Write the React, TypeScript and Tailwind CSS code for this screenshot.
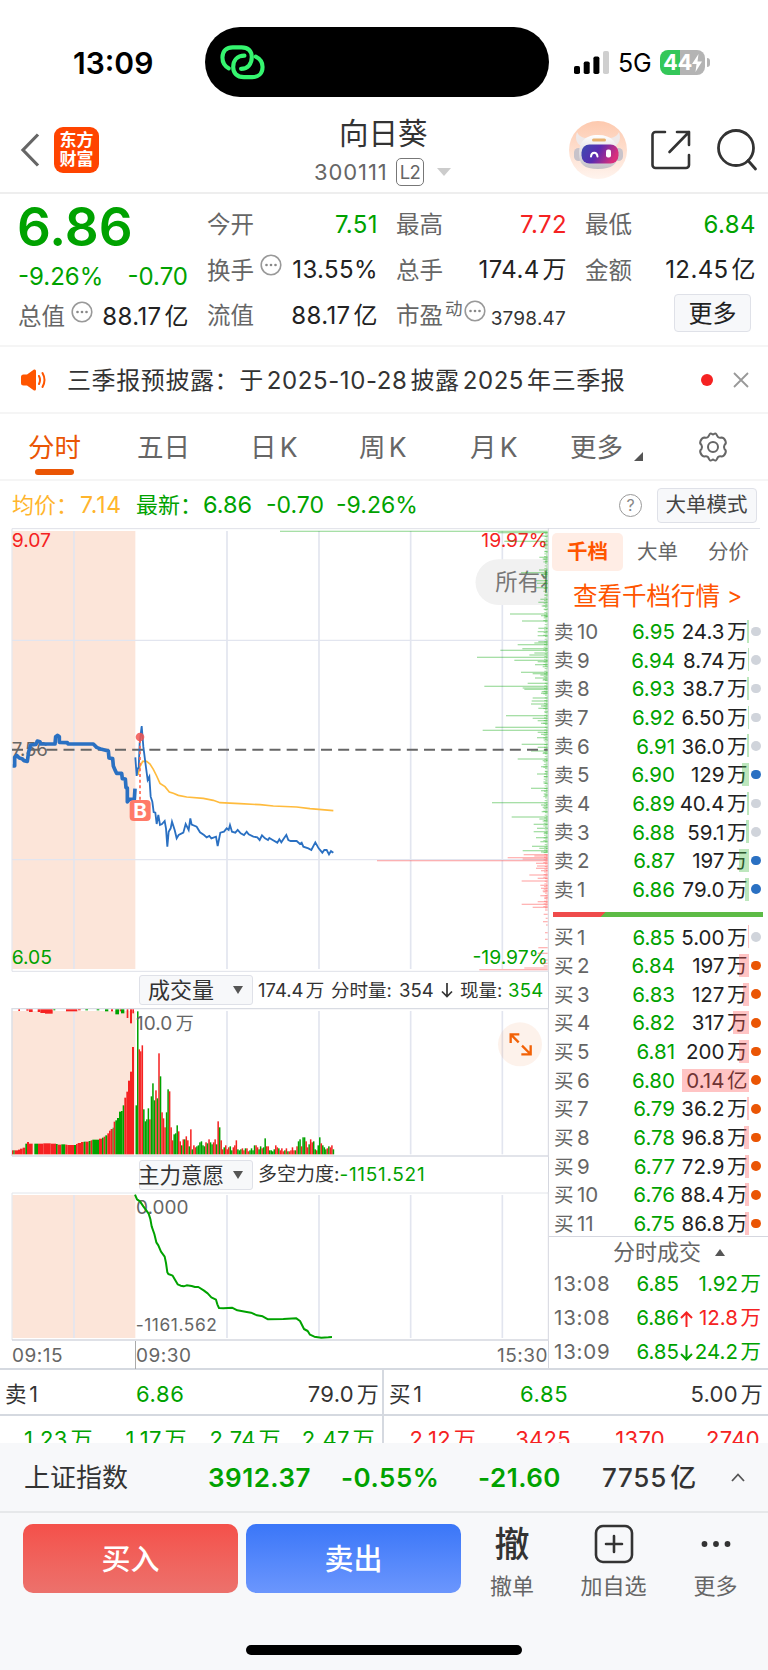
import React from "react";
import clsx from "clsx";

interface DepthRow {
  label: string;
  level: number;
  price: string;
  qty: string;
  bar: number;
  dot: "gray" | "blue" | "orange";
}

const sells: DepthRow[] = [
  { label: "卖", level: 10, price: "6.95", qty: "24.3万", bar: 2, dot: "gray" },
  { label: "卖", level: 9, price: "6.94", qty: "8.74万", bar: 1, dot: "gray" },
  { label: "卖", level: 8, price: "6.93", qty: "38.7万", bar: 2, dot: "gray" },
  { label: "卖", level: 7, price: "6.92", qty: "6.50万", bar: 1, dot: "gray" },
  { label: "卖", level: 6, price: "6.91", qty: "36.0万", bar: 2, dot: "gray" },
  { label: "卖", level: 5, price: "6.90", qty: "129万", bar: 7, dot: "blue" },
  { label: "卖", level: 4, price: "6.89", qty: "40.4万", bar: 2, dot: "gray" },
  { label: "卖", level: 3, price: "6.88", qty: "59.1万", bar: 3, dot: "gray" },
  { label: "卖", level: 2, price: "6.87", qty: "197万", bar: 10, dot: "blue" },
  { label: "卖", level: 1, price: "6.86", qty: "79.0万", bar: 4, dot: "blue" },
];

const buys: DepthRow[] = [
  { label: "买", level: 1, price: "6.85", qty: "5.00万", bar: 1, dot: "gray" },
  { label: "买", level: 2, price: "6.84", qty: "197万", bar: 10, dot: "orange" },
  { label: "买", level: 3, price: "6.83", qty: "127万", bar: 6, dot: "orange" },
  { label: "买", level: 4, price: "6.82", qty: "317万", bar: 16, dot: "orange" },
  { label: "买", level: 5, price: "6.81", qty: "200万", bar: 10, dot: "orange" },
  { label: "买", level: 6, price: "6.80", qty: "0.14亿", bar: 67, dot: "orange" },
  { label: "买", level: 7, price: "6.79", qty: "36.2万", bar: 2, dot: "orange" },
  { label: "买", level: 8, price: "6.78", qty: "96.8万", bar: 5, dot: "orange" },
  { label: "买", level: 9, price: "6.77", qty: "72.9万", bar: 4, dot: "orange" },
  { label: "买", level: 10, price: "6.76", qty: "88.4万", bar: 4, dot: "orange" },
  { label: "买", level: 11, price: "6.75", qty: "86.8万", bar: 4, dot: "orange" },
];

const trades = [
  { time: "13:08", price: "6.85", arrow: "", qty: "1.92万" },
  { time: "13:08", price: "6.86", arrow: "up", qty: "12.8万" },
  { time: "13:09", price: "6.85", arrow: "down", qty: "24.2万" },
];

// chart units are thirds of a pixel
const preOpenLine =
  "38,738 44,738 44,712 50,706 58,714 66,716 72,722 82,724 86,695 92,675 108,673 112,663 120,665 122,672 165,672 167,650 173,646 178,650 178,667 202,668 204,672 280,672 290,682 305,688 325,693 327,714 338,716 340,738 346,752 350,760 365,760 367,776 376,777 378,803 382,804 382,846 388,838 403,838 405,806";

const priceLine =
  "406,712 410,768 413,745 416,745 419,670 425,618 430,680 437,735 443,780 448,770 452,830 457,845 461,876 466,878 470,912 475,885 480,915 486,912 494,903 498,925 502,980 506,935 512,925 516,905 524,930 530,955 536,945 550,938 557,912 566,930 571,895 575,914 590,920 600,937 612,945 620,952 628,948 634,955 648,950 653,978 661,938 672,935 680,925 686,930 690,915 696,935 706,938 713,930 722,940 732,945 740,935 746,943 760,950 772,952 779,960 786,946 795,955 804,960 808,954 818,960 832,968 838,958 844,967 852,955 859,945 865,960 872,963 890,963 900,972 905,968 910,980 925,985 934,990 946,967 956,985 967,998 973,990 980,990 987,1003 993,993 1000,998";

const averageLine =
  "414,765 420,740 428,724 440,724 450,732 460,748 470,768 480,790 495,800 508,816 520,820 535,826 560,831 610,835 640,841 660,848 720,851 780,854 820,858 890,861 930,866 1000,872";

const forceLine =
  "405,135 411,149 420,155 430,170 446,192 451,208 455,230 463,253 469,278 475,287 483,306 494,321 498,340 502,368 505,373 518,378 525,390 533,404 542,408 551,410 560,407 575,409 585,412 595,412 611,422 623,431 634,443 648,450 652,464 657,475 670,476 696,474 712,482 736,486 753,489 771,497 788,500 804,509 850,508 889,506 900,514 912,538 923,544 930,555 943,561 964,564 985,563 996,562";

const askBars: [number, number][] = [
  [34, 803], [38, 150], [48, 20], [64, 130], [75, 12], [95, 10], [112, 25], [117, 15], [125, 8], [150, 26], [158, 80], [163, 20], [182, 35], [190, 32],
  [203, 35], [225, 10], [238, 22], [247, 28], [258, 18], [268, 12], [282, 113], [287, 20], [290, 10], [303, 77], [325, 28], [335, 30], [347, 30],
  [365, 28], [369, 40], [374, 90], [386, 76], [391, 142], [399, 40], [405, 55], [412, 212], [421, 100], [425, 30], [434, 38], [440, 15], [457, 80],
  [461, 45], [465, 22], [474, 38], [480, 15], [490, 60], [499, 190], [504, 75], [508, 70], [515, 18], [520, 20], [534, 45], [543, 48], [552, 50],
  [558, 20], [565, 28], [575, 10], [587, 125], [595, 45], [602, 30], [610, 20], [622, 157], [631, 195], [637, 30], [643, 20], [653, 32], [660, 12],
  [673, 78], [682, 30], [693, 50], [700, 15], [717, 90], [722, 15], [740, 20], [755, 8], [762, 32], [770, 12], [790, 12], [805, 50], [812, 20],
  [825, 10], [848, 167], [855, 20], [862, 15], [875, 18], [891, 108], [897, 25], [903, 15], [913, 42], [925, 32], [935, 42], [940, 12], [953, 35],
  [965, 22], [979, 47], [985, 25], [992, 75], [996, 20],
];

const bidBars: [number, number][] = [
  [1004, 72], [1008, 40], [1013, 120], [1017, 75], [1022, 512], [1030, 35], [1038, 32], [1045, 35], [1052, 20], [1065, 55], [1075, 30], [1083, 78],
  [1096, 22], [1105, 20], [1113, 15], [1127, 22], [1133, 10], [1145, 30], [1153, 78], [1162, 45], [1170, 8], [1183, 12], [1195, 6], [1205, 14],
  [1215, 5], [1238, 8], [1258, 8], [1283, 28], [1300, 30], [1320, 12], [1330, 18], [1338, 12], [1344, 70], [1349, 205],
];

const volumes = [
  49, 143, 105, 103, 109, 45, 33, 35, 46, 35, 58, 71, 54, 64, 56, 101, 78, 42, 36, 27, 42, 65, 63, 27, 14, 20, 21, 29, 23, 13, 9, 15, 15, 18, 14, 8,
  25, 5, 9, 7, 8, 9, 12, 13, 9, 8, 12, 11, 15, 12, 10, 12, 15, 10, 33, 27, 14, 5, 7, 9, 5, 7, 8, 4, 7, 9, 14, 5, 4, 5, 6, 4, 6, 6, 3, 4, 6, 4, 9, 9, 7,
  5, 8, 6, 7, 16, 8, 8, 4, 4, 3, 5, 9, 7, 6, 4, 6, 3, 4, 6, 3, 3, 4, 7, 4, 4, 8, 13, 15, 8, 17, 17, 13, 7, 10, 15, 12, 13, 5, 4, 9, 17, 11, 9, 7, 5, 6,
  8, 7, 9, 5,
];
const volumeColors =
  "ggrrrggggrgggrgrgrrrggrrrgggrrgrgrrgrgrrggggggrgrggrrgrgrrgrrrggrrrgggrrgrrggggrrggrggrrggggrrgrrrgrgrrrrgrggrggrrgrrggrggrgggrgrrg";

// x, width, height, colour
const preVolumes: [number, number, number, string][] = [
  [36, 4, 12, "r"], [40, 4, 12, "g"], [44, 10, 12, "r"], [54, 6, 14, "r"], [60, 8, 17, "r"], [68, 8, 20, "r"], [76, 5, 32, "g"], [81, 6, 37, "r"],
  [87, 11, 32, "r"], [103, 11, 32, "g"], [114, 16, 32, "r"], [130, 22, 33, "r"], [152, 16, 32, "r"], [168, 5, 31, "g"], [173, 11, 29, "r"],
  [184, 12, 30, "g"], [196, 6, 29, "r"], [202, 20, 28, "r"], [222, 6, 28, "g"], [228, 5, 31, "r"], [233, 10, 34, "r"], [243, 8, 37, "r"],
  [251, 6, 38, "g"], [257, 9, 38, "r"], [266, 6, 40, "g"], [272, 5, 42, "r"], [277, 20, 44, "g"], [297, 9, 47, "r"], [306, 5, 50, "g"],
  [311, 5, 53, "r"], [316, 6, 57, "g"], [322, 5, 63, "r"], [327, 5, 71, "r"], [332, 6, 76, "r"], [338, 3, 80, "g"], [341, 5, 98, "r"],
  [346, 5, 102, "g"], [351, 6, 109, "g"], [357, 6, 128, "g"], [363, 5, 130, "g"], [368, 5, 147, "g"], [373, 6, 170, "r"], [379, 5, 188, "r"],
  [384, 6, 221, "r"], [390, 6, 248, "r"], [396, 6, 322, "r"],
];

const hangingVolumes: [number, number, number, string][] = [
  [55, 5, 5, "r"], [79, 7, 4, "r"], [87, 11, 8, "r"], [113, 8, 8, "r"], [121, 14, 11, "r"], [135, 23, 13, "r"], [160, 6, 3, "g"], [198, 34, 6, "r"],
  [234, 8, 3, "r"], [256, 8, 3, "g"], [290, 8, 3, "g"], [315, 10, 6, "g"], [333, 6, 6, "r"], [346, 11, 15, "g"], [359, 4, 6, "r"], [363, 10, 12, "g"],
  [380, 5, 26, "r"], [390, 6, 42, "r"], [397, 5, 12, "r"],
];

const gridX = [222, 681, 957, 1232, 1507];

function GridLines({ top, bottom }: { top: number; bottom: number }) {
  return (
    <g stroke="#e2e5ef" strokeWidth={5}>
      {gridX.map((x) => (
        <line key={x} x1={x} x2={x} y1={top} y2={bottom} />
      ))}
    </g>
  );
}

function DepthBars({ bars, from, to, fill }: { bars: [number, number][]; from: number; to: number; fill: string }) {
  const base: number[] = [];
  for (let y = from; y < to; y += 4) base.push(y);
  return (
    <g fill={fill}>
      {base.map((y) => (
        <rect key={y} x={1643 - 3 - ((y * 7) % 11)} y={y} width={3 + ((y * 7) % 11)} height={3.4} />
      ))}
      {bars.map(([y, len]) => (
        <rect key={y} x={1643 - len} y={y - 2} width={len} height={4} />
      ))}
    </g>
  );
}

function StatusBar() {
  return (
    <div className="flex h-[102px] items-end pb-[5px]">
      <div className="flex h-[70px] w-[205px] items-center pt-[2px] pl-[73px] text-[30px] font-semibold text-black">13:09</div>
      <div className="flex h-[70px] w-[344px] items-center rounded-full bg-black pl-[15px]">
        <svg className="h-[36px] w-[45px]" viewBox="0 0 46 36" fill="none" stroke="#35f56f" strokeWidth="4.2" strokeLinecap="round">
          <path d="M9 24.5C4 22 2.500 18 2.500 13.500C2.500 6 7 3 13 3H22C29 3 32.500 7 32.500 13C32.500 20 28.500 25 21.500 25" />
          <path d="M36.500 12.500C41.500 15 43.500 18.500 43.500 23C43.500 30 39 33.500 33 33.500H24.500C17 33.500 13.500 29 13.500 23C13.500 16.500 17.500 11.500 25 11.500" />
        </svg>
      </div>
      <div className="flex h-[70px] items-center pt-[1px] pl-[25px]">
        <svg className="h-[23px] w-[36px]" viewBox="0 0 36 23">
          <rect x="0" y="15" width="6" height="8" rx="1.800" />
          <rect x="9.700" y="10.500" width="6" height="12.500" rx="1.800" />
          <rect x="19.400" y="5.500" width="6" height="17.500" rx="1.800" />
          <rect x="29" y="0" width="6" height="23" rx="1.800" fill="#cfcfcf" />
        </svg>
        <span className="ml-[8px] w-[42px] pt-[3px] text-[25px] tracking-[-0.3px] text-black">5G</span>
        <div className="flex h-[25px] w-[45px] items-center justify-center rounded-[8px] bg-[linear-gradient(90deg,#34c759_44%,#b4b4b4_44%)] text-[22px] font-bold tracking-[-0.5px] text-white">
          44
          <svg className="h-[18px] w-[10px]" viewBox="0 0 10 18" fill="white">
            <path d="M6.500 0L0 10H4.500L3.500 18L10 7.500H5.500Z" />
          </svg>
        </div>
        <div className="ml-[2px] h-[9px] w-[3px] rounded-r-full bg-[#b4b4b4]" />
      </div>
    </div>
  );
}

function Avatar() {
  return (
    <svg className="h-[58px] w-[58px]" viewBox="0 0 58 58">
      <defs>
        <linearGradient id="avatarBg" x1="0" y1="0" x2="0" y2="1">
          <stop offset="0" stopColor="#fdc9ae" />
          <stop offset="1" stopColor="#fff4ee" />
        </linearGradient>
        <linearGradient id="visor" x1="0" y1="0" x2="1" y2="0.300">
          <stop offset="0" stopColor="#3b4cb0" />
          <stop offset="0.500" stopColor="#5a2bb0" />
          <stop offset="1" stopColor="#d82f7c" />
        </linearGradient>
        <linearGradient id="shell" x1="0" y1="0" x2="0" y2="1">
          <stop offset="0" stopColor="#ffffff" />
          <stop offset="1" stopColor="#c4c0c6" />
        </linearGradient>
      </defs>
      <circle cx="29" cy="29" r="29" fill="url(#avatarBg)" />
      <path d="M8 11C6 17 7 22 12 25L19 17C13 17 10 15 8 11Z" fill="#efe9e9" />
      <path d="M50 11C52 17 51 22 46 25L39 17C45 17 48 15 50 11Z" fill="#efe9e9" />
      <rect x="5" y="27" width="9" height="13" rx="4.500" fill="#c8c3ca" />
      <rect x="45" y="27" width="9" height="13" rx="4.500" fill="#c8c3ca" />
      <path d="M29 14C43 14 49 22 49 33C49 43 43 48 29 48C15 48 10 43 10 33C10 22 15 14 29 14Z" fill="url(#shell)" />
      <rect x="23" y="17.500" width="14" height="3" rx="1.500" fill="#e8b06c" />
      <rect x="12.500" y="23.500" width="37" height="19" rx="8" fill="url(#visor)" />
      <path d="M22 35.500C22.500 30.500 28 30.500 28.500 35.500" fill="none" stroke="white" strokeWidth="2" strokeLinecap="round" />
      <rect x="37" y="28.500" width="5" height="8" rx="2" fill="white" />
    </svg>
  );
}

function Header() {
  return (
    <div className="flex h-[92px] items-center border-b-2 border-[#eeeeee] pt-[5px]">
      <svg className="ml-[20px] h-[34px] w-[20px]" viewBox="0 0 20 34" fill="none" stroke="#666" strokeWidth="3.200">
        <path d="M18 1.500L3 17L18 32.500" />
      </svg>
      <div className="ml-[14px] flex h-[46px] w-[45px] flex-col items-center justify-center rounded-[9px] bg-[#ff4400] text-[17px] leading-[19px] font-bold text-white">
        <span>东方</span>
        <span>财富</span>
      </div>
      <div className="w-[470px] whitespace-nowrap">
        <div className="ml-[240px] text-[29.500px] leading-[38px] text-[#333]">向日葵</div>
        <div className="mt-[6px] ml-[215px] flex h-[28px] items-center leading-[28px]">
          <span className="w-[82px] pt-[1px] text-[22px] tracking-[0.900px] text-[#666]">300111</span>
          <span className="flex h-[28px] w-[28px] items-center justify-center rounded-[5px] border border-[#777] text-[18.500px] tracking-[-0.500px] text-[#666]">L2</span>
          <svg className="ml-[13px] h-[8px] w-[14px]" viewBox="0 0 14 8" fill="#ccc">
            <path d="M0 0H14L7 8Z" />
          </svg>
        </div>
      </div>
      <Avatar />
      <svg className="ml-[24px] h-[40px] w-[40px]" viewBox="0 0 40 40" fill="none" stroke="#333" strokeWidth="2.600" strokeLinecap="round" strokeLinejoin="round">
        <path d="M14 2H4.500A3 3 0 0 0 1.500 5V35A3 3 0 0 0 4.500 38H35A3 3 0 0 0 38 35V25" />
        <path d="M26 2H38V15M38 2L18.500 22" />
      </svg>
      <svg className="ml-[26px] h-[42px] w-[42px]" viewBox="0 0 42 42" fill="none" stroke="#333" strokeWidth="2.800" strokeLinecap="round">
        <circle cx="19" cy="19" r="17.500" />
        <path d="M31 31.500L38.500 40" />
      </svg>
    </div>
  );
}

function MoreDots() {
  return (
    <svg className="h-[22px] w-[22px]" viewBox="0 0 22 22" fill="none" stroke="#999" strokeWidth="1.600">
      <circle cx="11" cy="11" r="9.800" />
      <g fill="#888" stroke="none">
        <circle cx="6.500" cy="11" r="1.300" />
        <circle cx="11" cy="11" r="1.300" />
        <circle cx="15.500" cy="11" r="1.300" />
      </g>
    </svg>
  );
}

function Stat({ label, value, color = "text-[#222]", dots = false }: { label: string; value: string; color?: string; dots?: boolean }) {
  return (
    <div className="flex h-[45.5px] items-center justify-between">
      <span className="flex items-center text-[23.500px] text-[#666]">
        {label}
        {dots && (
          <span className="ml-[6px] pb-[10px]">
            <MoreDots />
          </span>
        )}
      </span>
      <span className={clsx("-mr-[1px] text-[24px] tracking-[0.400px]", color)}>{value}</span>
    </div>
  );
}

function Quote() {
  return (
    <div className="grid h-[153px] grid-cols-[170px_170px_170px_170px] gap-[19px] border-b-2 border-[#f5f5f5] pt-[8px] pl-[18px] whitespace-nowrap">
      <div>
        <div className="-ml-[1px] flex h-[51px] items-center text-[53px] font-semibold text-[#00a200]">6.86</div>
        <div className="flex h-[48px] items-center justify-between text-[24px] text-[#00a200]">
          <span>-9.26%</span>
          <span>-0.70</span>
        </div>
        <div className="-mt-[7px]">
          <Stat label="总值" value="88.17亿" dots />
        </div>
      </div>
      <div>
        <Stat label="今开" value="7.51" color="text-[#00a200]" />
        <Stat label="换手" value="13.55%" dots />
        <Stat label="流值" value="88.17亿" />
      </div>
      <div>
        <Stat label="最高" value="7.72" color="text-[#f52222]" />
        <Stat label="总手" value="174.4万" />
        <div className="flex h-[45.5px] items-center text-[23.500px] text-[#666]">
          市盈
          <span className="ml-[2px] pb-[14px] text-[17.500px]">动</span>
          <span className="ml-[1px] pb-[9px]">
            <MoreDots />
          </span>
          <span className="ml-auto pt-[7px] text-[19px] tracking-[0.200px] text-[#333]">3798.47</span>
        </div>
      </div>
      <div>
        <Stat label="最低" value="6.84" color="text-[#00a200]" />
        <Stat label="金额" value="12.45亿" />
        <button className="mt-[1px] mr-[4px] ml-auto flex h-[38px] w-[77px] items-center justify-center rounded-[4px] border-[1.500px] border-[#dfe1e8] bg-[#f7f8fa] pt-[1px] text-[24px] text-[#222]">
          更多
        </button>
      </div>
    </div>
  );
}

function Notice() {
  return (
    <div className="flex h-[67px] items-center border-b-2 border-[#f5f5f5]">
      <svg className="ml-[21px] h-[22px] w-[26px]" viewBox="0 0 26 22" fill="#ff5500">
        <path d="M0 8Q0 5.500 2.500 5.500H6L13 0.500Q15 0 15 2V20Q15 22 13 21.500L6 16.500H2.500Q0 16.500 0 14Z" />
        <path d="M18 7Q20 11 18 15M21.500 4Q25.500 11 21.500 18" fill="none" stroke="#ff5500" strokeWidth="2" strokeLinecap="round" />
      </svg>
      <div className="ml-[20px] w-[634px] pt-[2px] text-[24px] tracking-[0.600px] whitespace-nowrap text-[#333]">
        三季报预披露：于2025-10-28披露2025年三季报
      </div>
      <div className="h-[12px] w-[12px] rounded-full bg-[#f52222]" />
      <svg className="ml-[20px] h-[16px] w-[16px]" viewBox="0 0 16 16" stroke="#999" strokeWidth="1.800">
        <path d="M1 1L15 15M15 1L1 15" />
      </svg>
    </div>
  );
}

function PeriodTabs() {
  return (
    <div className="flex h-[67px] border-b-2 border-[#f5f5f5] text-[26.500px] text-[#666]">
      <div className="flex w-[109px] flex-col items-center pt-[14px] leading-[38px] text-[#ea5504]">
        分时
        <span className="mt-[3px] h-[6px] w-[39px] rounded-full bg-[#ea5504]" />
      </div>
      <span className="w-[107px] pt-[14px] pl-[28px] leading-[38px]">五日</span>
      <span className="w-[107px] pt-[14px] pl-[34px] leading-[38px]">日K</span>
      <span className="w-[107px] pt-[14px] pl-[36px] leading-[38px]">周K</span>
      <span className="w-[107px] pt-[14px] pl-[40px] leading-[38px]">月K</span>
      <span className="flex w-[160px] items-end pb-[13px] pl-[33px] leading-[38px]">
        更多
        <svg className="mb-[5px] ml-[11px] h-[9px] w-[9px]" viewBox="0 0 9 9" fill="#555">
          <path d="M9 0V9H0Z" />
        </svg>
      </span>
      <svg className="mt-[17px] h-[32px] w-[32px]" viewBox="0 0 32 32" fill="none" stroke="#666" strokeWidth="2" strokeLinejoin="round">
        <path d="M12 4.500Q13 1.500 15 3Q16 3.800 17 3Q19 1.500 20 4.500L21 6Q22.500 7 24.500 6.500Q27 6.500 28.500 10Q29.500 12.500 27.500 14Q26.500 16 27.500 18Q29.500 19.500 28.500 22Q27 25.500 24.500 25.500Q22.500 25 21 26L20 28Q19 30.500 17 29Q16 28.200 15 29Q13 30.500 12 28L11 26Q9.500 25 7.500 25.500Q5 25.500 3.500 22Q2.500 19.500 4.500 18Q5.500 16 4.500 14Q2.500 12.500 3.500 10Q5 6.500 7.500 6.500Q9.500 7 11 6Z" />
        <circle cx="16" cy="16" r="5" />
      </svg>
    </div>
  );
}

function InfoRow() {
  return (
    <div className="flex h-[47px] items-center pt-[1px] pl-[12px] text-[22px] whitespace-nowrap text-[#00a200]">
      <span className="w-[68px] text-[#ffb52d]">均价：</span>
      <span className="w-[56px] text-[23px] tracking-[0.700px] text-[#ffb52d]">7.14</span>
      <span className="w-[67px]">最新：</span>
      <span className="w-[63px] text-[23.500px]">6.86</span>
      <span className="w-[70px] text-[23px]">-0.70</span>
      <span className="w-[283px] text-[23px]">-9.26%</span>
      <span className="flex h-[23px] w-[23px] items-center justify-center rounded-full border-[1.500px] border-[#999] text-[16px] text-[#888]">?</span>
      <button className="ml-[15px] flex h-[35px] w-[100px] items-center justify-center rounded-[4px] border-[1.500px] border-[#dfe1e8] bg-[#f7f8fa] pr-[1px] text-[20.500px] text-[#444]">
        大单模式
      </button>
    </div>
  );
}

function PriceChart() {
  return (
    <svg className="block h-[444px] w-[549px]" viewBox="0 24 1647 1332">
      <rect x="37" y="33" width="369" height="1314" fill="#fce5d9" />
      <GridLines top={33} bottom={1347} />
      <g stroke="#e2e5ef" strokeWidth="4">
        <path d="M37 361H1643M37 1019H1643" />
      </g>
      <path d="M36 1354V26H1647M36 1354H1645" fill="none" stroke="#dfe1e8" strokeWidth="3" />
      <path d="M1645 24V1356" stroke="#d5d7df" strokeWidth="3" />
      <path d="M1545 118H1643V255H1495A68.500 68.500 0 0 1 1495 118Z" fill="#f1f1f1" />
      <svg x="1425" y="118" width="218" height="137" viewBox="1425 118 218 137">
        <text x="1486" y="210" fontSize="67" fill="#777">
          所有将
        </text>
      </svg>
      <text x="1643" y="82" fontSize="58" fill="#f52222" textAnchor="end">
        19.97%
      </text>
      <text x="1643" y="1333" fontSize="58" fill="#00a200" textAnchor="end">
        -19.97%
      </text>
      <text x="35" y="82" fontSize="58" fill="#f52222">
        9.07
      </text>
      <text x="35" y="1333" fontSize="58" fill="#00a200">
        6.05
      </text>
      <DepthBars bars={askBars} from={36} to={998} fill="#00a20058" />
      <DepthBars bars={bidBars} from={1002} to={1165} fill="#ff4a4a68" />
      <text x="35" y="707" fontSize="56" fill="#666">
        7.56
      </text>
      <line x1="36" x2="1643" y1="689" y2="689" stroke="#666" strokeWidth="6" strokeDasharray="33 18.500" />
      <polyline points={averageLine} fill="none" stroke="#ffbb3d" strokeWidth="5" />
      <polyline points={preOpenLine} fill="none" stroke="#2a70c2" strokeWidth="11" strokeLinejoin="round" />
      <polyline points={priceLine} fill="none" stroke="#2a70c2" strokeWidth="5.500" />
      <path d="M420 660V840" stroke="#ff6652" strokeWidth="5" strokeDasharray="9 8" />
      <circle cx="420" cy="651" r="13" fill="#f2544f" fillOpacity="0.850" />
      <rect x="389" y="840" width="63" height="63" rx="12" fill="#ff7a68" />
      <text x="420" y="893" fontSize="62" fontWeight="700" fill="white" textAnchor="middle">
        B
      </text>
    </svg>
  );
}

function VolumeChart() {
  const color = (c: string) => (c === "g" ? "#00a200" : "#f52222");
  return (
    <svg className="block h-[149px] w-[549px]" viewBox="0 144 1647 447">
      <rect x="37" y="153" width="369" height="430" fill="#fce5d9" />
      <GridLines top={153} bottom={583} />
      <path d="M36 588V146H1645M36 588H1645" fill="none" stroke="#d9dce3" strokeWidth="4" />
      <path d="M1645 144V591" stroke="#d5d7df" strokeWidth="3" />
      {preVolumes.map(([x, w, h, c]) => (
        <rect key={x} x={x} y={583 - h} width={w} height={h} fill={color(c)} />
      ))}
      {hangingVolumes.map(([x, w, h, c]) => (
        <rect key={x} x={x} y={148} width={w} height={h} fill={color(c)} />
      ))}
      {volumes.map((v, i) => (
        <rect key={i} x={406.500 + i * 4.550} y={583 - v * 3} width={4.550} height={v * 3} fill={color(volumeColors[i])} />
      ))}
      <text x="408" y="209" fontSize="57" fill="#666">
        10.0
      </text>
      <text x="527" y="209" fontSize="54" fill="#666">
        万
      </text>
      <circle cx="1560" cy="253" r="66" fill="#ea5504" fillOpacity="0.080" />
      <path d="M1532 249V223H1558M1533 224L1556 247M1592 256V283H1564M1591 282L1566 257" fill="none" stroke="#f26207" strokeWidth="7" />
    </svg>
  );
}

function ForceChart() {
  return (
    <svg className="block h-[149px] w-[549px]" viewBox="0 127 1647 447">
      <rect x="37" y="136" width="369" height="429" fill="#fce5d9" />
      <GridLines top={136} bottom={565} />
      <path d="M36 571V130H1645" fill="none" stroke="#e2e5ea" strokeWidth="3" />
      <path d="M36 571H1645" stroke="#d5d7df" strokeWidth="4" />
      <path d="M1645 127V574" stroke="#d5d7df" strokeWidth="3" />
      <text x="408" y="193" fontSize="57" fill="#666">
        0.000
      </text>
      <text x="407" y="543" fontSize="52" letterSpacing="1.800" fill="#666">
        -1161.562
      </text>
      <polyline points={forceLine} fill="none" stroke="#00a200" strokeWidth="6" strokeLinejoin="round" />
    </svg>
  );
}

function IndicatorButton({ label, wide = false }: { label: string; wide?: boolean }) {
  return (
    <button
      className={clsx(
        "flex h-[30px] w-[114px] items-center justify-between rounded-[3px] border-[1.500px] border-[#dfe1e8] bg-[#f7f8fa] pr-[9px] text-[#333]",
        wide ? "text-[21.500px]" : "pl-[8px] text-[22px]"
      )}
    >
      <span className={clsx("pt-[1px]", wide && "-ml-[2px]")}>{label}</span>
      <svg className="h-[8px] w-[10px]" viewBox="0 0 10 8" fill="#555">
        <path d="M0 0H10L5 8Z" />
      </svg>
    </button>
  );
}

function DepthLine({ row, side }: { row: DepthRow; side: "sell" | "buy" }) {
  return (
    <div className="flex h-[28.670px] items-center pl-[5px] text-[20.500px]">
      <span className="flex w-[56px] items-center pt-[2px] text-[#666]">
        <span className="w-[23px] text-[19.500px]">{row.label}</span>
        <span className="text-[20.500px]">{row.level}</span>
      </span>
      <span className="w-[65px] pt-[2px] text-right text-[#00a200]">{row.price}</span>
      <span className="relative flex h-[23px] w-[74px] items-center justify-end pt-[2px] pr-[1.500px] text-[#222]">
        {row.qty}
        <span
          className={clsx("absolute top-0 right-0 h-full", side === "sell" ? "bg-[#43b943]/35" : "bg-[#f55]/35")}
          style={{ width: row.bar }}
        />
      </span>
      <span
        className={clsx(
          "ml-[2px] h-[9.500px] w-[9.500px] rounded-full",
          row.dot === "gray" && "bg-[#d0d4db]",
          row.dot === "blue" && "bg-[#2a70c2]",
          row.dot === "orange" && "bg-[#ea5504]"
        )}
      />
    </div>
  );
}

function DepthPanel() {
  return (
    <div className="w-[219px] whitespace-nowrap">
      <div className="mr-[8px] flex h-[43px] items-center border-t border-[#dfe1e8] pt-[4px] pl-[3px] text-[20.500px] text-[#666]">
        <span className="flex h-[38px] w-[71px] shrink-0 items-center justify-center rounded-[5px] bg-[#ffede5] font-bold text-[#ff5500]">千档</span>
        <span className="w-[71px] shrink-0 pl-[14px]">大单</span>
        <span className="pl-[14px]">分价</span>
      </div>
      <div className="flex h-[46px] items-center pt-[5px] pl-[24px] text-[24.500px] text-[#ff5500]">
        查看千档行情<span className="ml-[7px] text-[23px]">&gt;</span>
      </div>
      {sells.map((row) => (
        <DepthLine key={row.level} row={row} side="sell" />
      ))}
      <div className="mt-[8px] mb-[6px] ml-[4px] h-[5px] w-[210px] bg-[linear-gradient(135deg,#ef4b4b_37px,#5dbb46_37.500px)]" />
      {buys.map((row) => (
        <DepthLine key={row.level} row={row} side="buy" />
      ))}
      <div className="-mt-[2px] flex h-[32px] items-center border-t border-[#d5d7df] pl-[64px] text-[22px] text-[#666]">
        分时成交
        <svg className="ml-[14px] h-[7px] w-[10px]" viewBox="0 0 10 7" fill="#555">
          <path d="M0 7H10L5 0Z" />
        </svg>
      </div>
      {trades.map((t, i) => (
        <div key={i} className="flex h-[34px] items-center pl-[5px] text-[20.500px] text-[#00a200]">
          <span className="w-[60px] tracking-[0.800px] text-[#666]">{t.time}</span>
          <span className="w-[65px] text-right">{t.price}</span>
          <svg
            className={clsx("ml-[1px] h-[16px] w-[13px]", t.arrow === "up" && "text-[#f52222]", t.arrow === "down" && "rotate-180")}
            viewBox="0 0 13 16"
            fill="none"
            stroke="currentColor"
            strokeWidth="2"
          >
            {t.arrow && <path d="M6.500 16V1.500M1 7L6.500 1.500L12 7" />}
          </svg>
          <span className={clsx("w-[68px] text-right", t.arrow === "up" && "text-[#f52222]")}>{t.qty}</span>
        </div>
      ))}
    </div>
  );
}

function Market() {
  return (
    <div className="flex h-[842px] border-b-2 border-[#d5d9e0]">
      <div className="w-[549px]">
        <PriceChart />
        <div className="flex h-[36px] items-center border-r border-[#d5d7df] pl-[139px] text-[18.500px] whitespace-nowrap text-[#333]">
          <IndicatorButton label="成交量" />
          <span className="ml-[5px] w-[73px] pt-[2px]">174.4万</span>
          <span className="w-[68px] pt-[2px]">分时量:</span>
          <span className="w-[42px] pt-[2px]">354</span>
          <svg className="h-[15px] w-[12px]" viewBox="0 0 12 15" fill="none" stroke="#333" strokeWidth="1.700">
            <path d="M6 0V13.500M1 8.500L6 13.500L11 8.500" />
          </svg>
          <span className="ml-[7px] w-[48px] pt-[2px]">现量:</span>
          <span className="pt-[2px] tracking-[0.300px] text-[#00a200]">354</span>
        </div>
        <VolumeChart />
        <div className="flex h-[35px] items-center border-r border-[#d5d7df] pl-[139px] text-[19px] whitespace-nowrap text-[#333]">
          <IndicatorButton label="主力意愿" wide />
          <span className="ml-[5px] pt-[2px]">多空力度:</span>
          <span className="pt-[2px] tracking-[0.700px] text-[#00a200]">-1151.521</span>
        </div>
        <ForceChart />
        <div className="flex h-[28px] items-center border-r border-[#d5d7df] pl-[12px] text-[19px] tracking-[0.500px] text-[#666]">
          <span className="w-[123px] pt-[2px]">09:15</span>
          <span className="flex h-full items-center border-l border-[#aaa] pt-[2px]">09:30</span>
          <span className="ml-auto pt-[2px]">15:30</span>
        </div>
      </div>
      <DepthPanel />
    </div>
  );
}

function BestPrices() {
  const sellQueue = ["1.23万", "1.17万", "2.74万", "2.47万"];
  const buyQueue = ["2.12万", "3425", "1370", "2740"];
  return (
    <div className="flex h-[73px] overflow-hidden text-[22px] whitespace-nowrap text-[#333]">
      <div className="w-[384px] border-r-2 border-[#d5d9e0]">
        <div className="flex h-[46px] items-center border-b-2 border-[#d5d9e0] pt-[4px] pr-[3px] pl-[5px]">
          <span className="w-[131px] text-[21.500px]">卖1</span>
          <span className="tracking-[0.600px] text-[#00a200]">6.86</span>
          <span className="ml-auto tracking-[0.300px]">79.0万</span>
        </div>
        <div className="grid grid-cols-[93px_94px_94px_94px] pt-[7px] text-right tracking-[0.400px] text-[#00a200]">
          {sellQueue.map((q) => (
            <span key={q}>{q}</span>
          ))}
        </div>
      </div>
      <div className="w-[384px]">
        <div className="flex h-[46px] items-center border-b-2 border-[#d5d9e0] pt-[4px] pr-[5px] pl-[5px]">
          <span className="w-[131px] text-[21.500px]">买1</span>
          <span className="tracking-[0.600px] text-[#00a200]">6.85</span>
          <span className="ml-auto tracking-[0.300px]">5.00万</span>
        </div>
        <div className="grid grid-cols-[92px_95px_94px_95px] pt-[7px] text-right tracking-[0.300px] text-[#f52222]">
          {buyQueue.map((q) => (
            <span key={q}>{q}</span>
          ))}
        </div>
      </div>
    </div>
  );
}

function IndexBar() {
  return (
    <div className="flex h-[70px] items-center border-b-2 border-[#e6e8ea] pl-[24px] text-[26px] font-semibold tracking-[0.500px] whitespace-nowrap text-[#00a200]">
      <span className="w-[184px] text-[26px] font-normal tracking-normal text-[#333]">上证指数</span>
      <span className="w-[133px]">3912.37</span>
      <span className="w-[137px]">-0.55%</span>
      <span className="w-[124px]">-21.60</span>
      <span className="w-[129px] font-medium tracking-[0.700px] text-[#333]">7755亿</span>
      <svg className="h-[9px] w-[14px]" viewBox="0 0 14 9" fill="none" stroke="#555" strokeWidth="1.800">
        <path d="M1 8L7 1.500L13 8" />
      </svg>
    </div>
  );
}

function ActionBar() {
  return (
    <div className="flex h-[132px] pt-[11px] pl-[23px] text-[22px] text-[#666]">
      <button className="h-[69px] w-[215px] rounded-[10px] bg-linear-to-b from-[#f4504a] to-[#ec716c] pt-[2px] text-[29px] font-medium text-white">买入</button>
      <button className="ml-[8px] h-[69px] w-[215px] rounded-[10px] bg-linear-to-b from-[#3a76f8] to-[#6b96fd] pt-[2px] text-[29px] font-medium text-white">卖出</button>
      <div className="flex w-[102px] flex-col items-center">
        <span className="flex h-[40px] items-center text-[35px] font-medium text-[#333]">撤</span>
        <span className="mt-[6px]">撤单</span>
      </div>
      <div className="flex w-[101px] flex-col items-center">
        <svg className="h-[40px] w-[40px]" viewBox="0 0 40 40" fill="none" stroke="#333" strokeWidth="2.600" strokeLinecap="round">
          <rect x="2" y="2" width="36" height="36" rx="7" />
          <path d="M20 12V28M12 20H28" />
        </svg>
        <span className="mt-[6px]">加自选</span>
      </div>
      <div className="flex w-[103px] flex-col items-center">
        <svg className="h-[40px] w-[30px]" viewBox="0 0 30 40" fill="#333">
          <circle cx="3.500" cy="20" r="2.900" />
          <circle cx="15" cy="20" r="2.900" />
          <circle cx="26.500" cy="20" r="2.900" />
        </svg>
        <span className="mt-[6px]">更多</span>
      </div>
    </div>
  );
}

export default function App() {
  return (
    <div className="h-[1670px] w-[768px] overflow-hidden bg-white font-[family-name:Inter,'Noto_Sans_CJK_SC',sans-serif] [text-autospace:normal]">
      <StatusBar />
      <Header />
      <Quote />
      <Notice />
      <PeriodTabs />
      <InfoRow />
      <Market />
      <BestPrices />
      <div className="h-[227px] bg-[#f7f8fa]">
        <IndexBar />
        <ActionBar />
        <div className="mx-auto h-[10px] w-[276px] rounded-full bg-black" />
      </div>
    </div>
  );
}
